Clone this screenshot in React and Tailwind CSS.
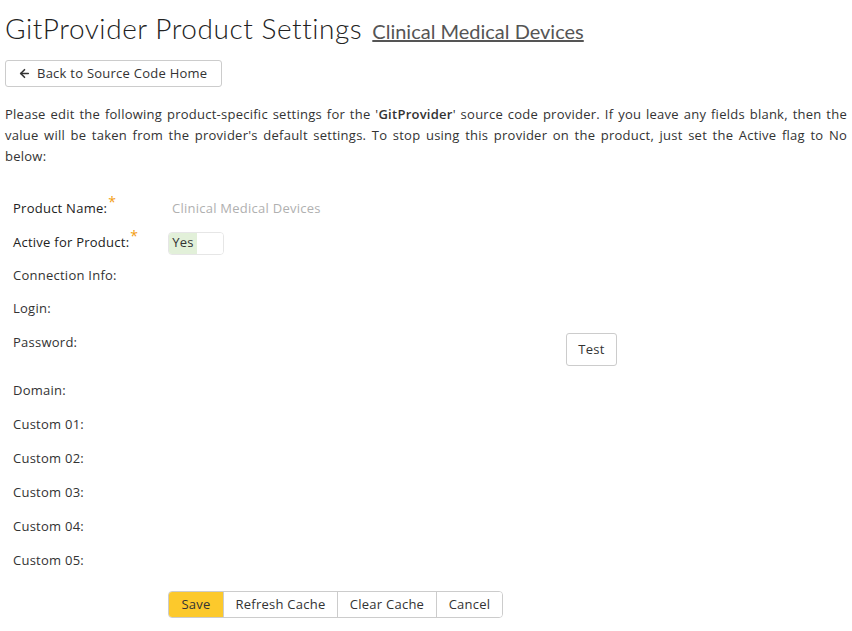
import { ArrowLeft } from 'lucide-react'

const rows = [
  { label: 'Product Name:', req: true, h: 'h-[34px]', value: 'name' },
  { label: 'Active for Product:', req: true, h: 'h-[34px]', value: 'toggle' },
  { label: 'Connection Info:', h: 'h-[32px]' },
  { label: 'Login:', h: 'h-[34px]' },
  { label: 'Password:', h: 'h-[48px]', value: 'test' },
  { label: 'Domain:', h: 'h-[34px]' },
  { label: 'Custom 01:', h: 'h-[34px]' },
  { label: 'Custom 02:', h: 'h-[34px]' },
  { label: 'Custom 03:', h: 'h-[34px]' },
  { label: 'Custom 04:', h: 'h-[34px]' },
  { label: 'Custom 05:', h: 'h-[34px]' },
]

function Value({ kind }) {
  if (kind === 'name') {
    return <span className="pl-[4px] text-[#b0b0b0]">Clinical Medical Devices</span>
  }
  if (kind === 'toggle') {
    return (
      <div className="flex h-[23px] w-[56px] overflow-hidden rounded-[4px] border border-[#e6e6e6]">
        <span className="flex w-[28px] items-center justify-center bg-[#e2f0d9] text-[#333]">Yes</span>
        <span className="flex-1 bg-white" />
      </div>
    )
  }
  if (kind === 'test') {
    return (
      <div className="flex w-full justify-end pr-[230px] pt-[7px]">
        <button className="h-[33px] w-[51px] rounded-[3px] border border-[#ccc] bg-white text-[#333]">Test</button>
      </div>
    )
  }
  return null
}

export default function App() {
  return (
    <div className="min-h-[631px] bg-white px-[5px] pt-[10px] font-['Open_Sans',sans-serif] text-[13px] tracking-[0.25px] text-[#333]">
      <h1 className="flex items-baseline gap-[10px] leading-[36px] tracking-normal">
        <span className="font-['Lato',sans-serif] text-[28px] font-light tracking-[0.55px] text-[#222]">GitProvider Product Settings</span>
        <a className="font-['Lato',sans-serif] text-[20px] tracking-normal text-[#555] underline">Clinical Medical Devices</a>
      </h1>

      <button className="mt-[11px] flex h-[27px] w-[217px] items-center gap-[6px] rounded-[3px] border border-[#ccc] bg-white px-[12px] text-[#333]">
        <ArrowLeft className="h-[13px] w-[13px]" strokeWidth={3} />
        Back to Source Code Home
      </button>

      <p className="mt-[17px] text-justify leading-[21px]">
        Please edit the following product-specific settings for the '<span className="font-semibold">GitProvider</span>' source code provider. If you leave any fields blank, then the value will be taken from the provider's default settings. To stop using this provider on the product, just set the Active flag to No below:
      </p>

      <div className="mt-[25px] flex flex-col pl-[8px]">
        {rows.map((r) => (
          <div key={r.label} className={`flex ${r.h} ${r.value === 'test' ? 'items-start' : 'items-center'}`}>
            <div className={`w-[155px] shrink-0 ${r.req ? 'text-[#222]' : ''} ${r.value === 'test' ? 'pt-[7px]' : ''}`}>
              {r.label}
              {r.req && <span className="relative top-[-6px] ml-[1px] text-[14px] leading-none text-[#f39c12]">*</span>}
            </div>
            <div className="flex flex-1 items-center">
              <Value kind={r.value} />
            </div>
          </div>
        ))}
        <div className="mt-[13px] flex pl-[155px]">
          <div className="flex h-[27px] overflow-hidden rounded-[4px] border border-[#ccc]">
            <button className="w-[54px] bg-[#fcc92c] text-[#333]">Save</button>
            <button className="w-[114px] border-l border-[#ccc] bg-white">Refresh Cache</button>
            <button className="w-[99px] border-l border-[#ccc] bg-white">Clear Cache</button>
            <button className="w-[66px] border-l border-[#ccc] bg-white">Cancel</button>
          </div>
        </div>
      </div>
    </div>
  )
}
